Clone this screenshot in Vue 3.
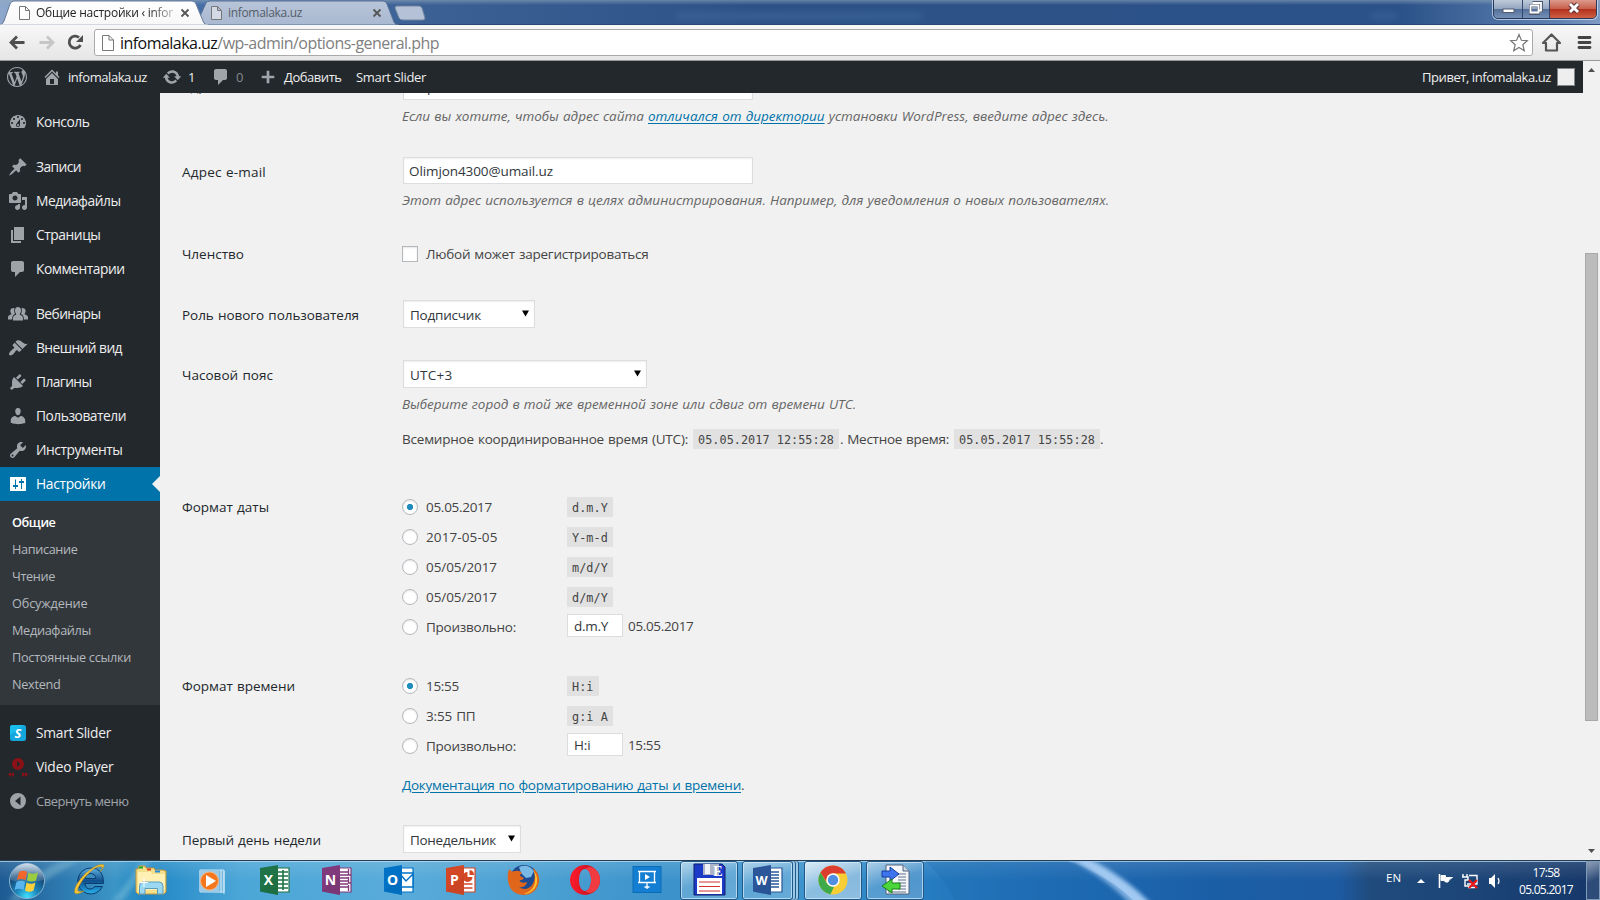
<script setup>
const vFit = {
  mounted(el, { value }) {
    if (!value) return
    const width = el.getBoundingClientRect().width
    el.style.letterSpacing = `${(value - width) / el.textContent.trim().length}px`
  },
}

const icons = {
  wordpress: 'M20 10c0-5.51-4.49-10-10-10C4.48 0 0 4.49 0 10c0 5.52 4.48 10 10 10 5.51 0 10-4.48 10-10zM7.78 15.37L4.37 6.22c.55-.02 1.17-.08 1.17-.08.5-.06.44-1.13-.06-1.11 0 0-1.45.11-2.37.11-.18 0-.37 0-.58-.01C4.12 2.69 6.87 1.11 10 1.11c2.33 0 4.45.87 6.05 2.34-.68-.11-1.65.39-1.65 1.58 0 .74.45 1.36.9 2.1.35.61.55 1.36.55 2.46 0 1.49-1.4 5-1.4 5l-3.03-8.37c.54-.02.82-.17.82-.17.5-.05.44-1.25-.06-1.22 0 0-1.44.12-2.38.12-.87 0-2.33-.12-2.33-.12-.5-.03-.56 1.2-.06 1.22l.92.08 1.26 3.41zM17.41 10c.24-.64.74-1.87.43-4.25.7 1.29 1.05 2.71 1.05 4.25 0 3.29-1.73 6.24-4.4 7.78.97-2.59 1.94-5.2 2.92-7.78zM6.1 18.09C3.12 16.65 1.11 13.53 1.11 10c0-1.3.23-2.48.72-3.59C3.25 10.3 4.67 14.2 6.1 18.09zm4.03-6.63l2.58 6.98c-.86.29-1.76.45-2.71.45-.79 0-1.57-.11-2.29-.33.81-2.38 1.62-4.74 2.42-7.1z',
  home: 'M16 8.5l1.53 1.53-1.06 1.06L10 4.6l-6.47 6.49-1.06-1.06L10 2.5l4 4v-2h2v4zm-6-2.46l6 5.99V18H4v-5.97zM12 17v-5H8v5h4z',
  update: 'M10.2 3.28c3.53 0 6.43 2.61 6.92 6h2.08l-3.5 4-3.5-4h2.32c-.45-1.97-2.21-3.45-4.32-3.45-1.45 0-2.73.71-3.54 1.78L4.95 5.66C6.23 4.2 8.11 3.28 10.2 3.28zm-.4 13.44c-3.52 0-6.43-2.61-6.92-6H.8l3.5-4c1.17 1.33 2.33 2.67 3.5 4H5.48c.45 1.97 2.21 3.45 4.32 3.45 1.45 0 2.73-.71 3.54-1.78l1.71 1.95c-1.28 1.46-3.15 2.38-5.25 2.38z',
  comments: 'M5 2h9c1.1 0 2 .9 2 2v7c0 1.1-.9 2-2 2h-2l-5 5v-5H5c-1.1 0-2-.9-2-2V4c0-1.1.9-2 2-2z',
  plus: 'M17 8.5v3h-5.5V17h-3v-5.5H3v-3h5.500V3h3v5.500z',
  dashboard: 'M3.760 16h12.480c1.100-1.370 1.760-3.110 1.760-5 0-4.420-3.580-8-8-8s-8 3.580-8 8c0 1.890.660 3.630 1.760 5zM10 4c.550 0 1 .450 1 1s-.450 1-1 1-1-.450-1-1 .450-1 1-1zM6 6c.550 0 1 .450 1 1s-.450 1-1 1-1-.450-1-1 .450-1 1-1zm8 0c.550 0 1 .450 1 1s-.450 1-1 1-1-.450-1-1 .450-1 1-1zm-5.370 5.550L12 7v6c0 1.100-.900 2-2 2s-2-.900-2-2c0-.570.240-1.080.630-1.450zM4 10c.550 0 1 .450 1 1s-.450 1-1 1-1-.450-1-1 .450-1 1-1zm12 0c.550 0 1 .450 1 1s-.450 1-1 1-1-.450-1-1 .450-1 1-1zm-5 3c0-.550-.450-1-1-1s-1 .450-1 1 .450 1 1 1 1-.450 1-1z',
  post: 'M10.44 3.02l1.82-1.82 6.36 6.35-1.83 1.82c-1.05-.68-2.48-.57-3.41.36l-.75.75c-.92.93-1.04 2.35-.35 3.41l-1.83 1.82-2.41-2.41-2.8 2.79c-.42.42-3.38 2.71-3.8 2.29s1.86-3.39 2.28-3.81l2.79-2.79L4.1 9.36l1.83-1.82c1.05.69 2.48.57 3.4-.36l.75-.75c.93-.92 1.05-2.35.36-3.41z',
  media: 'M13 11V4c0-.55-.45-1-1-1h-1.67L9 1H5L3.67 3H2c-.55 0-1 .45-1 1v7c0 .55.45 1 1 1h10c.55 0 1-.45 1-1zM7 4.5c1.38 0 2.5 1.12 2.5 2.5S8.38 9.5 7 9.5 4.5 8.38 4.5 7 5.62 4.5 7 4.5zM14 6h5v10.5c0 1.38-1.12 2.5-2.5 2.5S14 17.88 14 16.5s1.12-2.5 2.5-2.5c.17 0 .34.02.5.05V9h-3V6zm-4 8.05V13h2v3.5c0 1.38-1.12 2.5-2.5 2.5S7 17.88 7 16.5 8.12 14 9.5 14c.17 0 .34.02.5.05z',
  page: 'M6 15V2h10v13H6zm-1 1h8v2H3V5h2v11z',
  groups: 'M10 3C11.900 3 13.300 4.400 13 7C12.800 8.500 12.300 9.200 11.900 9.700V10.800C14 11.200 15 12.400 15 14.500V16.500H5V14.500C5 12.400 6 11.200 8.100 10.800V9.700C7.700 9.200 7.200 8.500 7 7C6.700 4.400 8.100 3 10 3zM5.500 4C6 4 6.300 4.100 6.400 4.200C6 6 6.200 8.500 7 10C5 10.700 4.200 12.300 4.100 15.500H0V13.500C0 11.500 1.500 10.800 3.300 10.400V9.500C1.500 7.500 2.300 4 5.500 4zM14.500 4C17.700 4 18.500 7.500 16.700 9.500V10.400C18.500 10.800 20 11.500 20 13.500V15.500H15.900C15.800 12.300 15 10.700 13 10C13.800 8.500 14 6 13.600 4.200C13.700 4.100 14 4 14.500 4z',
  appearance: 'M14.48 11.06L7.41 3.99l1.5-1.5c.5-.56 2.3-.47 3.51.32 1.21.8 1.43 1.28 2.91 2.1 1.18.64 2.45 1.26 4.45.85zm-.71.71L6.7 4.7 4.93 6.47c-.39.39-.39 1.02 0 1.41l1.06 1.06c.39.39.39 1.03 0 1.42-.6.6-1.43 1.11-2.21 1.69-.35.26-.7.53-1.01.84C1.43 14.23.4 16.08 1.4 17.07c.99 1 2.84-.03 4.18-1.36.31-.31.58-.66.85-1.02.57-.78 1.08-1.61 1.69-2.21.39-.39 1.02-.39 1.41 0l1.06 1.06c.39.39 1.02.39 1.41 0z',
  plugins: 'M13.11 4.36L9.87 7.6 8 5.73l3.24-3.24c.35-.34 1.05-.2 1.56.32.52.51.66 1.21.31 1.55zm-8 1.77l.91-1.12 9.01 9.01-1.19.84c-.71.71-2.63 1.16-3.82 1.16H6.14L4.9 17.26c-.59.59-1.54.59-2.12 0-.59-.58-.59-1.53 0-2.12l1.24-1.24v-3.88c0-1.13.4-3.19 1.09-3.89zm7.26 3.97l3.24-3.24c.34-.35 1.04-.21 1.55.31.52.51.66 1.21.31 1.55l-3.24 3.25z',
  users: 'M10 9.25c-2.27 0-2.73-3.44-2.73-3.44C7 4.02 7.82 2 9.97 2c2.16 0 2.98 2.02 2.71 3.81 0 0-.41 3.44-2.68 3.44zm0 2.57L12.72 10c2.39 0 4.52 2.33 4.52 4.53v2.49s-3.65 1.13-7.24 1.13c-3.65 0-7.24-1.13-7.24-1.13v-2.49c0-2.25 1.94-4.48 4.47-4.48z',
  tools: 'M16.68 9.77c-1.34 1.34-3.3 1.67-4.95.99l-5.41 6.52c-.99.99-2.59.99-3.58 0s-.99-2.59 0-3.57l6.52-5.42c-.68-1.65-.35-3.61.99-4.95 1.28-1.28 3.12-1.62 4.72-1.06l-2.89 2.89 2.82 2.82 2.86-2.87c.53 1.58.18 3.39-1.08 4.65zM3.81 16.21c.4.39 1.04.39 1.43 0 .4-.4.4-1.04 0-1.43-.39-.4-1.03-.4-1.43 0-.39.39-.39 1.03 0 1.43z',
  settings: 'M2 3H18V17H2zM8 11V5.500H7V11H5V13H7V15H8V13H10V11zM13 9V15H14V9H16V7H14V5H13V7H11V9z',
  collapse: 'M10 2a8 8 0 1 0 0 16a8 8 0 1 0 0-16zM12.500 5.500V14.500L7 10z',
}

const menu = [
  { label: 'Консоль', icon: 'dashboard', w: 53.5, gap: true },
  { label: 'Записи', icon: 'post', w: 45 },
  { label: 'Медиафайлы', icon: 'media', w: 84.5 },
  { label: 'Страницы', icon: 'page', w: 64.5 },
  { label: 'Комментарии', icon: 'comments', w: 88.5, gap: true },
  { label: 'Вебинары', icon: 'groups', w: 64.5 },
  { label: 'Внешний вид', icon: 'appearance', w: 86 },
  { label: 'Плагины', icon: 'plugins', w: 55.5 },
  { label: 'Пользователи', icon: 'users', w: 90 },
  { label: 'Инструменты', icon: 'tools', w: 86.5 },
  { label: 'Настройки', icon: 'settings', w: 69.5, active: true },
]
const submenu = [
  ['Общие', 43.5], ['Написание', 65.5], ['Чтение', 43], ['Обсуждение', 75.5],
  ['Медиафайлы', 79], ['Постоянные ссылки', 119], ['Nextend', 48.5],
]
const dateFormats = [
  { label: '05.05.2017', w: 66, code: 'd.m.Y', on: true },
  { label: '2017-05-05', w: 71.5, code: 'Y-m-d' },
  { label: '05/05/2017', w: 71, code: 'm/d/Y' },
  { label: '05/05/2017', w: 71, code: 'd/m/Y' },
]
const timeFormats = [
  { label: '15:55', w: 33, code: 'H:i', on: true },
  { label: '3:55 ПП', w: 49.5, code: 'g:i A' },
]
const office = {
  excel: { letter: 'X', color: '#1f7346', dark: '#17603a' },
  onenote: { letter: 'N', color: '#80397b', dark: '#6a2e68' },
  outlook: { letter: 'O', color: '#0072c6', dark: '#0062ad' },
  powerpoint: { letter: 'P', color: '#d24726', dark: '#b83a1b' },
  word: { letter: 'W', color: '#2b579a', dark: '#214a86' },
}
const tasks = [
  'ie', 'explorer', 'player', 'excel', 'onenote', 'outlook', 'powerpoint',
  'firefox', 'opera', 'slides', 'floppy', 'word', 'chrome', 'transfer',
]
const running = ['floppy', 'word', 'chrome', 'transfer']
</script>

<template>
  <div class="screen">
    <header class="titlebar">
      <svg class="tabs" width="440" height="25" viewBox="0 0 440 25">
        <defs>
          <linearGradient id="tabOn" x2="0" y2="1"><stop stop-color="#fff" /><stop offset="1" stop-color="#f7f7f7" /></linearGradient>
          <linearGradient id="tabOff" x2="0" y2="1"><stop stop-color="#b8c4d8" /><stop offset="1" stop-color="#a9b9d1" /></linearGradient>
        </defs>
        <path d="M196 25L206 3Q207 1 210 1H383Q386 1 387 4L394 22Q395 25 399 25z" fill="url(#tabOff)" stroke="#566f96" />
        <path d="M0 25Q3 24 4 21L10 4Q11 1 14 1H192Q195 1 196 4L203 21Q204 25 208 25z" fill="url(#tabOn)" stroke="#68799a" />
        <path d="M0 24.500H208V26H0z" fill="#f7f7f7" />
        <path d="M397 6H419Q421 6 422 8L425 18Q425 20 423 20H403Q400 20 399 18L395 8Q395 6 397 6z" fill="#b4c1d6" stroke="#71869f" />
        <g v-for="x in [19, 211]" :key="x" :transform="`translate(${x} 6)`" :fill="x === 19 ? '#fff' : '#d4dae5'" stroke="#777">
          <path d="M.5.5H6.500L10.500 4.500V13.500H.500zM6.500.500V4.500H10.500" />
        </g>
        <path d="M181.500 9.500l7 7m0-7l-7 7M373.500 9.500l7 7m0-7l-7 7" stroke="#555" stroke-width="1.800" />
      </svg>
      <div class="tab-text first"><span v-fit="137">Общие настройки ‹ infor</span></div>
      <div class="tab-text second"><span v-fit="74">infomalaka.uz</span></div>
      <div class="glass-blur one"></div>
      <div class="glass-blur two"></div>
      <div class="win-buttons">
        <div class="win-btn min"><svg width="28" height="17"><rect x="9" y="9" width="11" height="3.500" fill="#fff" stroke="#555c70" /></svg></div>
        <div class="win-btn max"><svg width="26" height="17"><path d="M9.500 2.500H18.500V10.500H16M7.500 5.500H15.500V13.500H7.500z" fill="none" stroke="#505a70" stroke-width="3" /><path d="M9.500 3H18V10.500H16M7.500 5.500H15.500V12.500H7.500z" fill="none" stroke="#fff" stroke-width="1.800" /></svg></div>
        <div class="win-btn close"><svg width="46" height="17"><path d="M20 4l8 8m0-8l-8 8" stroke="#5a3039" stroke-width="5" /><path d="M20 4l8 8m0-8l-8 8" stroke="#fff" stroke-width="3" /></svg></div>
      </div>
    </header>

    <nav class="toolbar">
      <svg width="94" height="36" viewBox="0 0 94 36" fill="none">
        <path d="M24.500 17.500H12M17 11.500L11 17.500L17 23.500" stroke="#4f4f4f" stroke-width="2.800" />
        <path d="M39.500 17.500H52M47 11.500L53 17.500L47 23.500" stroke="#c6c6c6" stroke-width="2.800" />
        <path d="M80.500 20A6 6 0 1 1 79 12.500" stroke="#4f4f4f" stroke-width="2.800" />
        <path d="M83 10V17H76z" fill="#4f4f4f" />
      </svg>
      <div class="omnibox">
        <svg width="24" height="26"><path d="M7.500 5.500H14L18.500 10V20.500H7.500zM14 5.500V10H18.500" fill="#fff" stroke="#777" /></svg>
        <span class="url" v-fit="319"><b>infomalaka.uz</b>/wp-admin/options-general.php</span>
        <svg class="star" width="20" height="20" viewBox="0 0 20 20"><path d="M10 1.500L12.400 7.300L18.300 7.700L13.800 11.700L15.300 17.800L10 14.500L4.700 17.800L6.200 11.700L1.700 7.700L7.600 7.300z" fill="#fff" stroke="#777" stroke-width="1.200" /></svg>
      </div>
      <svg width="67" height="36" fill="none"><path d="M10 18L18.500 9.500L27 18H24V25.500H13V18z" stroke="#555" stroke-width="2.200" stroke-linejoin="round" /><path d="M46 12.500H57M46 17.500H57M46 22.500H57" stroke="#444" stroke-width="2.800" stroke-linecap="round" /></svg>
    </nav>

    <div class="page">
      <div class="viewport">
        <div class="adminbar">
          <div class="ab ab-logo"><svg class="dash" viewBox="0 0 20 20"><path :d="icons.wordpress" /></svg></div>
          <div class="ab ab-home"><svg class="dash" viewBox="0 0 20 20"><path fill-rule="evenodd" :d="icons.home" /></svg><span v-fit="79">infomalaka.uz</span></div>
          <div class="ab ab-update"><svg class="dash" viewBox="0 0 20 20"><path :d="icons.update" /></svg><span>1</span></div>
          <div class="ab ab-comments"><svg class="dash" viewBox="0 0 20 20"><path :d="icons.comments" /></svg><span>0</span></div>
          <div class="ab ab-new"><svg class="dash" viewBox="0 0 20 20"><path :d="icons.plus" /></svg><span v-fit="57.500">Добавить</span></div>
          <div class="ab ab-slider"><span v-fit="70">Smart Slider</span></div>
          <div class="ab ab-user"><span v-fit="129">Привет, infomalaka.uz</span><i class="avatar"></i></div>
        </div>

        <div class="body">
          <aside class="sidebar">
            <div v-for="item in menu" :key="item.label" class="item" :class="{ active: item.active, gap: item.gap }">
              <svg class="dash" viewBox="0 0 20 20"><path fill-rule="evenodd" :d="icons[item.icon]" /></svg>
              <span v-fit="item.w">{{ item.label }}</span>
            </div>
            <div class="submenu">
              <div v-for="([label, w], i) in submenu" :key="label" :class="{ current: i === 0 }"><span v-fit="w">{{ label }}</span></div>
            </div>
            <div class="item">
              <svg class="dash" viewBox="0 0 20 20"><rect x="2" y="2" width="16" height="16" rx="2.500" fill="#13a6dd" /><path d="M2 12V4.500Q2 2 4.500 2H15.500z" fill="#18bdee" /><text x="10" y="15" class="slider-letter">S</text></svg>
              <span v-fit="75">Smart Slider</span>
            </div>
            <div class="item">
              <svg class="dash" viewBox="0 0 20 20"><g fill="#8b1116"><path fill-rule="evenodd" d="M10 1a6 6 0 1 0 0 12a6 6 0 1 0 0-12zM9 4L12.500 7L9 10z" /><path d="M3 15V20L0 17.500zM6 15V20L3 17.500zM14 15V20L17 17.500zM17 15V20L20 17.500z" /></g></svg>
              <span v-fit="77.500">Video Player</span>
            </div>
            <div class="item collapse">
              <svg class="dash" viewBox="0 0 20 20"><path fill-rule="evenodd" :d="icons.collapse" /></svg>
              <span v-fit="92.500">Свернуть меню</span>
            </div>
          </aside>

          <main class="form">
            <section class="row url-row">
              <label class="cut"><span v-fit="117">Адрес сайта (URL)</span></label>
              <div>
                <div class="field cut-field"><span>http://infomalaka.uz</span></div>
                <p class="desc"><span v-fit="706.500">Если вы хотите, чтобы адрес сайта <a>отличался от директории</a> установки WordPress, введите адрес здесь.</span></p>
              </div>
            </section>
            <section class="row email-row">
              <label><span v-fit="84">Адрес e-mail</span></label>
              <div>
                <div class="field"><span v-fit="144">Olimjon4300@umail.uz</span></div>
                <p class="desc"><span v-fit="707">Этот адрес используется в целях администрирования. Например, для уведомления о новых пользователях.</span></p>
              </div>
            </section>
            <section class="row member-row">
              <label><span v-fit="62">Членство</span></label>
              <div class="choice"><i class="check"></i><span v-fit="222.500">Любой может зарегистрироваться</span></div>
            </section>
            <section class="row role-row">
              <label><span v-fit="177">Роль нового пользователя</span></label>
              <div><div class="select role"><span v-fit="71">Подписчик</span><svg width="7" height="7"><path d="M0 .500H7L3.500 6.500z" /></svg></div></div>
            </section>
            <section class="row zone-row">
              <label><span v-fit="91">Часовой пояс</span></label>
              <div>
                <div class="select zone"><span v-fit="42.500">UTC+3</span><svg width="7" height="7"><path d="M0 .500H7L3.500 6.500z" /></svg></div>
                <p class="desc"><span v-fit="454">Выберите город в той же временной зоне или сдвиг от времени UTC.</span></p>
                <p class="clock-line"><span class="utc" v-fit="286">Всемирное координированное время (UTC):</span><code v-fit="146">05.05.2017 12:55:28</code><span class="local" v-fit="109">. Местное время:</span><code v-fit="146">05.05.2017 15:55:28</code><span>.</span></p>
              </div>
            </section>
            <section class="row date-row">
              <label><span v-fit="87">Формат даты</span></label>
              <div>
                <div v-for="f in dateFormats" :key="f.code" class="choice fmt">
                  <i class="radio" :class="{ on: f.on }"></i><span class="name"><span v-fit="f.w">{{ f.label }}</span></span><code>{{ f.code }}</code>
                </div>
                <div class="choice fmt custom"><i class="radio"></i><span class="name"><span v-fit="90">Произвольно:</span></span><div class="tiny"><span v-fit="34">d.m.Y</span></div><span class="sample" v-fit="65.500">05.05.2017</span></div>
              </div>
            </section>
            <section class="row time-row">
              <label><span v-fit="113">Формат времени</span></label>
              <div>
                <div v-for="f in timeFormats" :key="f.code" class="choice fmt">
                  <i class="radio" :class="{ on: f.on }"></i><span class="name"><span v-fit="f.w">{{ f.label }}</span></span><code>{{ f.code }}</code>
                </div>
                <div class="choice fmt custom"><i class="radio"></i><span class="name"><span v-fit="90">Произвольно:</span></span><div class="tiny"><span v-fit="16.500">H:i</span></div><span class="sample" v-fit="32.500">15:55</span></div>
                <p class="docs"><a v-fit="339">Документация по форматированию даты и времени</a>.</p>
              </div>
            </section>
            <section class="row week-row">
              <label><span v-fit="139">Первый день недели</span></label>
              <div><div class="select week"><span v-fit="86">Понедельник</span><svg width="7" height="7"><path d="M0 .500H7L3.500 6.500z" /></svg></div></div>
            </section>
          </main>
        </div>
      </div>
      <div class="scrollbar">
        <svg width="17" height="17"><path d="M5 11L8.500 7L12 11z" fill="#505050" /></svg>
        <div class="thumb"></div>
        <svg width="17" height="17"><path d="M5 6L8.500 10L12 6z" fill="#505050" /></svg>
      </div>
    </div>

    <footer class="taskbar">
      <svg class="wall" width="1600" height="40" preserveAspectRatio="none">
        <defs><filter id="soft"><feGaussianBlur stdDeviation="2" /></filter></defs>
        <path d="M1066 -4H1086Q1126 16 1152 44H1131Q1108 18 1066 -4z" fill="#a9cff5" opacity=".95" filter="url(#soft)" />
        <path d="M20 40Q50 14 80 0H62Q30 14 8 40zM122 40Q138 20 152 0H140Q130 20 112 40z" fill="#a8dce4" opacity=".3" filter="url(#soft)" />
        <path d="M925 0Q945 18 955 40H1134Q1110 16 1068 0z" fill="#1a67b0" opacity=".25" />
      </svg>
      <div class="start">
        <svg width="38" height="38" viewBox="0 0 38 38">
          <defs>
            <radialGradient id="orb" cx=".5" cy=".95" r=".9"><stop stop-color="#41e0ff" /><stop offset=".35" stop-color="#1c86bb" /><stop offset=".75" stop-color="#144878" /><stop offset="1" stop-color="#6e8fae" /></radialGradient>
            <linearGradient id="orbTop" x2="0" y2="1"><stop stop-color="#d8e4ee" stop-opacity=".9" /><stop offset="1" stop-color="#7ca2c0" stop-opacity=".25" /></linearGradient>
          </defs>
          <circle cx="19" cy="19" r="17.500" fill="url(#orb)" stroke="#8fb4cf" />
          <path d="M2.500 18A16.500 16.500 0 0 1 35.500 18Q19 23 2.500 18z" fill="url(#orbTop)" />
          <path d="M11 10Q15 7.500 19 10L17.500 18Q13 16 9 18z" fill="#f0662b" />
          <path d="M20.500 10.500Q25 13 30 10.500L28 18.500Q24 20.500 19 18.500z" fill="#9ccc3f" />
          <path d="M8.500 20Q13 17.500 17 20L15.500 28Q11 25.500 6.500 28z" fill="#5bb6f0" />
          <path d="M18.500 20.500Q23 23 27.500 20.500L25.500 28.500Q21 31 17 28.500z" fill="#fdd13b" />
        </svg>
      </div>
      <div v-for="name in tasks" :key="name" class="task" :class="[name, { running: running.includes(name) }]">
        <svg width="34" height="34" viewBox="0 0 34 34">
          <template v-if="office[name]">
            <path d="M18 5H31V29H18z" fill="#fff" :stroke="office[name].color" stroke-width="1.200" />
            <path v-if="name === 'excel'" d="M20 9H30M20 13H30M20 17H30M20 21H30M20 25H30M25 7V27" stroke="#1f7346" stroke-width="1.600" />
            <path v-else-if="name === 'outlook'" d="M18 10H31V24H18zM18 11L24 18L31 11" fill="#fff" stroke="#0072c6" stroke-width="1.500" />
            <g v-else-if="name === 'powerpoint'">
              <path d="M20 21H28.500M20 25H28.500" stroke="#d24726" stroke-width="1.600" />
              <path d="M23.500 9V14H28.500A5 5 0 1 1 23.500 9zM25.500 7A5 5 0 0 1 30 12H25.500z" fill="#d24726" />
            </g>
            <path v-else d="M20 9H28M20 12H28M20 15H28M20 18H28M20 21H28M20 24H28" :stroke="office[name].color" stroke-width="1.400" />
            <path v-if="name === 'onenote'" d="M28.500 6V12H31M28.500 14V20H31M28.500 22V28" fill="none" stroke="#80397b" stroke-width="1.300" />
            <path d="M2 5L20 2V32L2 28.500z" :fill="office[name].color" />
            <path d="M2 28.500L20 13V32z" :fill="office[name].dark" opacity=".25" />
            <text x="10.500" y="22" class="app-letter">{{ office[name].letter }}</text>
          </template>
          <template v-else-if="name === 'ie'">
            <defs><linearGradient id="ie" x2="0" y2="1"><stop stop-color="#5fb2e4" /><stop offset=".5" stop-color="#0f4d8c" /><stop offset="1" stop-color="#26b4ee" /></linearGradient></defs>
            <path fill-rule="evenodd" d="M18.500 5A13 13 0 1 0 30.500 23.500H23Q21 26 18 26Q13.500 26 13 20.500H31.500Q32 5 18.500 5zM13.200 15.500Q14 10.500 18.500 10.500T24 15.500z" fill="url(#ie)" stroke="#0b3d70" />
            <path d="M28 9Q34 2 31 1.500Q25 .500 14 10Q2 22 2.500 29Q3 33 12 28Q4 30 6 25Q10 16 18 9Q26 2 30.500 4Q31 5 28 9z" fill="#f7c433" stroke="#c58a10" stroke-width=".500" />
          </template>
          <template v-else-if="name === 'explorer'">
            <path d="M2 6H4L5 3H11L12 5H20L21 7H29L32 8V29L30 31H4L2 29z" fill="#f4df8b" stroke="#bd963a" />
            <path d="M4 9H17L18 11H31V27H4z" fill="#fff1b4" />
            <rect x="5" y="3.500" width="4" height="2" fill="#20a82c" /><rect x="13" y="5.500" width="4" height="2" fill="#da3c22" /><rect x="21" y="7.500" width="5" height="2" fill="#248ae0" />
            <path d="M5.500 31V23Q5.500 19 9 19H25Q29 19 29 23V31H23.500V25.500H11V31z" fill="#9bd8f2" stroke="#5a9dbd" />
            <path d="M10 15V24M6 19.500H14" stroke="#fff" />
          </template>
          <template v-else-if="name === 'player'">
            <path d="M4 7H28V29H4z" fill="#78b9de" stroke="#c4e3f5" /><path d="M25 7V30M28 8V31" stroke="#d5eefa" />
            <path d="M3 7H23V30L3 28z" fill="#9bcbe7" />
            <circle cx="13.500" cy="18" r="9" fill="#f4771d" stroke="#fbb277" /><path d="M10 12L20 18L10 24z" fill="#fff" />
          </template>
          <template v-else-if="name === 'firefox'">
            <circle cx="18" cy="16" r="14" fill="#1d4a90" /><path d="M13 4Q22 0 28 8L25 14L20 15L15 10z" fill="#79b9e6" />
            <path d="M3 6Q5 9.500 9 8Q14 7 16 10Q14 11 14 13L18 15Q17 17 13.500 17.500Q15 21 21 19Q20 25 13 24Q20 29 26 22Q31 15 27 5Q34 10 33 19Q30 32 17 32Q4 31 2 18Q1 12 3 6z" fill="#e0661b" />
            <path d="M28 8Q34 16 29 25Q24 31 18 31Q27 28 29 20Q30 14 28 8z" fill="#fbc631" />
          </template>
          <template v-else-if="name === 'opera'">
            <defs><linearGradient id="opera" x2="1"><stop stop-color="#ff1b2d" /><stop offset="1" stop-color="#b4101b" /></linearGradient></defs>
            <path fill-rule="evenodd" d="M17 2a15 15 0 1 0 0 30a15 15 0 1 0 0-30zM17 6C25 6 25 28 17 28S9 6 17 6z" fill="url(#opera)" />
            <path d="M17 28C25 28 25 6 17 6Q22 2 27 6Q32 10 32 17T27 28Q22 32 17 28z" fill="#f23a41" />
          </template>
          <template v-else-if="name === 'slides'">
            <rect x="3" y="3.500" width="28" height="26" fill="#147fd2" stroke="#0d6cb6" />
            <path d="M8 8.500H26M9.500 9V19.500H24.500V9M8 19.500H26M17 20V26M14.500 24H19.500" stroke="#fff" stroke-width="1.300" fill="none" /><path d="M15 11L20 14L15 17z" fill="#fff" />
          </template>
          <template v-else-if="name === 'floppy'">
            <path d="M2 1H30L33 4V32H2z" fill="#1c3ac8" stroke="#111e6c" /><path d="M11 1H27V12H11z" fill="#aeb4c8" /><path d="M13 1H18V11H13z" fill="#f1f2f7" />
            <path d="M5 15H30V31H5z" fill="#fff" /><path d="M7 19H28M7 23.500H28M7 28H28" stroke="#d03030" />
            <text x="26" y="13" class="floppy-letter">E</text>
          </template>
          <template v-else-if="name === 'chrome'">
            <circle cx="17" cy="17" r="14.500" fill="#f7ce36" />
            <path d="M4.500 9.500A14.500 14.500 0 0 1 30 10.500H17A7 7 0 0 0 10.500 19z" fill="#dd3d2e" />
            <path d="M4.500 9.500L11 20.500Q14 24 18 23.800L14.500 31.300A14.500 14.500 0 0 1 4.500 9.500z" fill="#3eaa49" />
            <circle cx="17" cy="17" r="6.700" fill="#fff" /><circle cx="17" cy="17" r="5.200" fill="#4f8ee0" />
          </template>
          <template v-else>
            <path d="M8 2H25L31 8V31H8z" fill="#f5f7fa" stroke="#51617b" /><path d="M25 2V8H31" fill="#ccd7e7" stroke="#51617b" />
            <path d="M18 11H28M20 14H28M20 17H28M20 20H28M20 23H28M20 26H28M10 29H28" stroke="#60718a" />
            <path d="M4 8H12V4L21 11L12 18V14H4z" fill="#3c75ed" stroke="#173d9c" /><path d="M22 20H14V16L4 23L14 30V26H22z" fill="#4cd63c" stroke="#198019" />
          </template>
        </svg>
      </div>
      <div class="tray">
        <span class="lang">EN</span>
        <svg width="100" height="40" viewBox="0 0 100 40">
          <path d="M11 22L15 18L19 22z" fill="#fff" />
          <path d="M33.500 13V27" stroke="#fff" stroke-width="1.600" /><path d="M35 14.500H39.500V16.500H46.500L43.500 18.500L42 21H39.500L38 19.500H35z" fill="#fff" stroke="#fff" />
          <path d="M57 13V16M61 13V16M56 16H62V19H59V25H64M63 14.500H71V23H61M62 26.500H69" fill="none" stroke="#fff" stroke-width="1.400" />
          <path d="M63 19L71 27M71 19L63 27" stroke="#f01818" stroke-width="2.200" />
          <path d="M83 17H85L89 13V27L85 23H83z" fill="#fff" /><path d="M92 17Q94 20 92 23" stroke="#fff" fill="none" stroke-width="1.200" />
        </svg>
        <div class="clock"><span v-fit="27">17:58</span><span v-fit="54">05.05.2017</span></div>
        <div class="desktop"></div>
      </div>
    </footer>
  </div>
</template>

<style>
html, body { margin: 0; overflow: hidden; }
</style>

<style scoped>
* { box-sizing: border-box; }
.screen { width: 1600px; height: 900px; display: flex; flex-direction: column; overflow: hidden; font-family: "Open Sans", "Noto Sans", sans-serif; font-size: 13.5px; color: #444; background: #f1f1f1; }
span, a, code { white-space: nowrap; }
p { margin: 0; }
svg { display: block; flex: none; }

.titlebar { position: relative; flex: none; height: 25px; background: linear-gradient(180deg, rgba(150,170,190,.55), transparent 5px), linear-gradient(90deg, #8da8cb 0, #476fa7 200px, #3b6094 440px, #2d5288 750px, #2b5289 1400px, #5f82b2 1560px, #7e9bc3 1600px); border-bottom: 1px solid #2a4773; }
.tabs { position: absolute; left: 0; top: 0; }
.tab-text { position: absolute; top: 4px; font-size: 12px; line-height: 18px; color: #222; }
.tab-text.first { left: 36px; width: 138px; overflow: hidden; -webkit-mask-image: linear-gradient(90deg, #000 112px, rgba(0,0,0,.25)); }
.tab-text.second { left: 228px; color: #555d68; }
.glass-blur { position: absolute; top: 13px; height: 6px; filter: blur(3px); background: #6f9bd0; opacity: .2; }
.glass-blur.one { left: 676px; width: 246px; }
.glass-blur.two { left: 1371px; width: 26px; }
.win-buttons { position: absolute; right: 3px; top: -1px; display: flex; border: 1px solid #26395a; border-radius: 0 0 5px 5px; overflow: hidden; box-shadow: 0 0 0 1px rgba(220,232,248,.7); }
.win-btn { height: 18px; background: linear-gradient(#bfcbda, #93a6c0 48%, #546f97 50%, #7691b8); border-right: 1px solid #34486c; }
.win-btn.close { border: 0; background: linear-gradient(#dc9a8c, #c8614d 48%, #b02f1c 50%, #cf6042); }

.toolbar { flex: none; height: 36px; display: flex; background: linear-gradient(#f7f7f7, #e6e6e6); border-bottom: 1px solid #999; }
.omnibox { flex: 1; height: 27px; margin-top: 4px; display: flex; align-items: center; background: #fff; border: 1px solid #aaa; border-radius: 3px; }
.url { margin-left: 1px; font-size: 16px; color: #808080; }
.url b { font-weight: 400; color: #111; }
.star { margin-left: auto; margin-right: 3px; }

.page { flex: none; height: 799px; display: flex; }
.viewport { flex: 1; display: flex; flex-direction: column; overflow: hidden; }
.adminbar { flex: none; height: 32px; display: flex; align-items: center; background: #23282d; color: #eee; font-size: 13px; }
.ab { display: flex; align-items: center; }
.dash { width: 20px; height: 20px; fill: #9ea3a8; }
.ab .dash { fill: #a0a5aa; }
.ab-logo { width: 42px; padding-left: 7px; }
.ab-home { width: 120px; gap: 6px; }
.ab-home .dash, .ab-update .dash { margin-top: -1px; }
.ab-update { width: 49px; gap: 6px; }
.ab-comments { width: 47px; gap: 5px; color: #84888c; }
.ab-new { width: 98px; gap: 6px; }
.ab-new .dash { width: 20px; height: 18px; }
.ab-user { margin-left: auto; gap: 6px; padding-right: 8px; }
.avatar { width: 18px; height: 18px; background: #eee; border: 1px solid #82878c; }

.body { flex: 1; display: flex; overflow: hidden; min-height: 0; }
.sidebar { flex: none; width: 160px; padding-top: 12px; background: #23282d; color: #eee; font-size: 13.8px; }
.item { position: relative; height: 34px; display: flex; align-items: center; gap: 8px; padding: 0 0 0 8px; }
.item.gap { margin-bottom: 11px; }
.item.active { background: #0073aa; color: #fff; }
.item.active .dash { fill: #fff; }
.item.active::after { content: ""; position: absolute; right: 0; top: 9px; border: 8px solid transparent; border-left: 0; border-right-color: #f1f1f1; }
.item span { line-height: 18px; }
.item.collapse { color: #a0a5aa; font-size: 13px; }
.submenu { height: 204px; padding: 8px 0 0 12px; margin-bottom: 11px; background: #32373c; color: #b4b9be; font-size: 12.7px; line-height: 27px; }
.submenu .current { color: #fff; font-weight: 600; }
.slider-letter { fill: #fff; font: italic bold 13px "Open Sans", sans-serif; text-anchor: middle; }

.form { flex: 1; padding-left: 22px; background: #f1f1f1; overflow: hidden; word-spacing: .7px; }
.row { display: grid; grid-template-columns: 220px 1fr; }
.row label { color: #23282d; font-weight: 500; line-height: 20px; }
.url-row { height: 64px; }
.email-row { height: 89px; }
.member-row { height: 54px; }
.role-row { height: 60px; }
.zone-row { height: 137px; }
.date-row { height: 179px; }
.time-row { height: 149px; }
.row .cut { margin-top: -17px; height: 20px; }
.email-row label, .role-row label, .zone-row label, .week-row label { padding-top: 5px; }
.member-row label { margin-top: -2px; }
.field { width: 350px; height: 27px; margin-left: 1px; padding-left: 5px; line-height: 26px; background: #fff; border: 1px solid #ddd; box-shadow: inset 0 1px 2px rgba(0,0,0,.07); color: #32373c; }
.cut-field { margin-top: -20px; }
.desc { margin-top: 6px; line-height: 20px; font-style: italic; color: #666; }
a { color: #0073aa; text-decoration: underline; text-underline-offset: 2px; }
.choice { display: flex; align-items: center; height: 16px; }
.check, .radio { flex: none; width: 16px; height: 16px; margin-right: 8px; background: #fff; border: 1px solid #b4b9be; box-shadow: inset 0 1px 2px rgba(0,0,0,.1); }
.radio { border-radius: 50%; }
.radio.on { background: radial-gradient(circle, #1e8cbe 2.800px, #fff 3.400px); }
.select { display: flex; align-items: center; justify-content: space-between; height: 28px; margin-left: 1px; padding: 0 5px 0 6px; background: #fff; border: 1px solid #ddd; box-shadow: inset 0 1px 2px rgba(0,0,0,.07); color: #32373c; }
.select span { padding-top: 1px; }
.select.role { width: 132px; }
.select.zone { width: 244px; }
.select.week { width: 118px; }
.select svg { margin-top: -1px; fill: #000; }
code { padding: 0 5px; height: 20px; line-height: 22px; background: #e1e1e1; font-family: "DejaVu Sans Mono", monospace; font-size: 11.8px; word-spacing: 0; display: inline-block; }
.clock-line { display: flex; margin-top: 15px; height: 20px; line-height: 20px; }
.utc { margin-right: 5px; }
.local { margin: 0 5px 0 1px; }
.fmt { height: 20px; margin-bottom: 10px; }
.name { width: 141px; }
.fmt code { min-width: 31px; letter-spacing: .08px; }
.tiny { width: 56px; height: 23px; margin-top: -3px; padding-left: 6px; line-height: 22px; background: #fff; border: 1px solid #ddd; color: #32373c; }
.sample { margin: -3px 0 0 5px; }
.docs { margin-top: 19px; line-height: 20px; }

.scrollbar { flex: none; width: 17px; display: flex; flex-direction: column; background: #f1f1f1; }
.scrollbar .thumb { height: 468px; width: 13px; margin: 175px 2px auto; background: #bcbcbc; border: 1px solid #a8a8a8; }

.taskbar { position: relative; flex: none; height: 40px; display: flex; border-top: 1px solid #263d54; box-shadow: inset 0 1px rgba(190,225,245,.7); background: linear-gradient(180deg, rgba(255,255,255,.12), transparent 50%), linear-gradient(90deg, #1d5a92 0, #2c78af 60px, #3b95c6 115px, #1f86c4 145px, #4ba6d7 240px, #58abd9 400px, #4ba0d2 540px, #3c93cb 660px, #3d94cd 800px, #267cc0 930px, #1f6cb4 1050px, #1a5fa7 1200px, #1d5aa0 1340px, #1f4b7c 1370px, #1c4477 1480px, #163768 1600px); }
.wall { position: absolute; left: 0; top: 0; }
.start { position: relative; width: 58px; padding: 1px 0 0 8px; }
.task { position: relative; width: 62px; display: flex; justify-content: center; padding-top: 2px; }
.task.running { width: 58px; margin: 0 4px 0 0; border: 1px solid #205887; border-radius: 3px; padding-top: 1px; background: linear-gradient(160deg, rgba(255,255,255,.55), rgba(255,255,255,.18) 50%, rgba(255,255,255,.22)); box-shadow: inset 0 0 0 1px rgba(220,240,255,.65); }
.task.floppy { margin-left: 2px; }
.task.word { width: 51px; margin-right: 11px; box-shadow: inset 0 0 0 1px rgba(220,240,255,.65), 2px 0 #9cc8e8, 3px 0 #205887, 5px 0 #9cc8e8, 6px 0 #205887; }
.task.chrome { background: linear-gradient(160deg, rgba(255,255,255,.8), rgba(255,255,255,.4) 55%, rgba(255,255,255,.45)); }
.app-letter { fill: #fff; font: bold 14px "Open Sans", sans-serif; text-anchor: middle; }
.word .app-letter { font-size: 12.5px; }
.floppy-letter { fill: #fff; font: bold 14px "Liberation Serif", serif; text-anchor: middle; }
.tray { position: relative; margin-left: auto; display: flex; color: #fff; font-size: 12px; }
.lang { width: 20px; padding-top: 9px; line-height: 16px; font-size: 11.5px; }
.clock { width: 80px; display: flex; flex-direction: column; align-items: center; padding-top: 3px; line-height: 17px; }
.desktop { width: 14px; border: 1px solid #7f99b8; background: linear-gradient(150deg, rgba(255,255,255,.45), rgba(255,255,255,.1) 50%); }
</style>
